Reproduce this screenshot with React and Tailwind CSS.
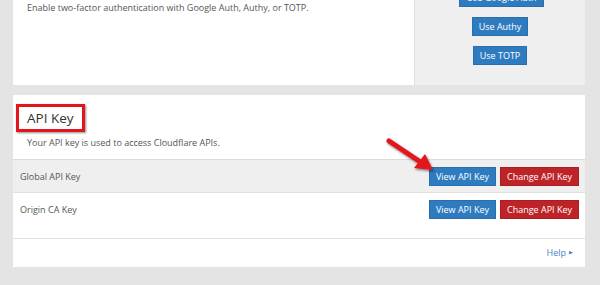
import React from 'react';

const font = { fontFamily: '"Open Sans", "Noto Sans", sans-serif' };

function Btn({ children, color = 'blue', className = '' }) {
  const colors =
    color === 'blue'
      ? 'bg-[#2f7bbf] border-[#2a6eab]'
      : 'bg-[#bd2327] border-[#a81e22]';
  return (
    <button
      className={`h-[19px] px-[6px] text-[9px] leading-none text-white border ${colors} ${className}`}
    >
      {children}
    </button>
  );
}

function KeyRow({ label, shaded }) {
  return (
    <div
      className={`flex items-start justify-between pl-[7px] pr-[6px] pt-[7px] border-b border-[#e2e2e2] ${
        shaded ? 'bg-[#efefef] h-[33px]' : 'bg-white h-[46px]'
      }`}
    >
      <span className="text-[9px] leading-[19px] text-[#555]">{label}</span>
      <div className="flex gap-[4px]">
        <Btn>View API Key</Btn>
        <Btn color="red">Change API Key</Btn>
      </div>
    </div>
  );
}

export default function App() {
  return (
    <div className="relative w-[600px] h-[285px] overflow-hidden bg-[#e4e4e4]" style={font}>
      <div className="pl-[13px] pr-[15px] -mt-[40px]">
        {/* two factor card */}
        <div className="flex h-[125px] bg-white">
          <div className="flex-1 pl-[14px] pt-[41px]">
            <p className="text-[9px] leading-[14px] text-[#555]">
              Enable two-factor authentication with Google Auth, Authy, or TOTP.
            </p>
          </div>
          <div className="w-[171px] bg-[#efefef] border-l border-[#dedede] flex flex-col items-center gap-[10px] pt-[28px]">
            <Btn className="ml-[3px]">Use Google Auth</Btn>
            <Btn>Use Authy</Btn>
            <Btn>Use TOTP</Btn>
          </div>
        </div>

        {/* api key card */}
        <div className="mt-[10px] bg-white">
          <div className="pl-[3px] pt-[9px] pb-[10px] border-b border-[#dcdcdc]">
            <h2 className="inline-block border-[3px] border-[#e3151c] shadow-[1px_1px_2px_rgba(0,0,0,0.45)] px-[8px] text-[13.5px] leading-[22px] text-[#333]">
              API Key
            </h2>
            <p className="pl-[11px] pt-[5px] text-[9px] leading-[12px] text-[#555]">
              Your API key is used to access Cloudflare APIs.
            </p>
          </div>
          <KeyRow label="Global API Key" shaded />
          <KeyRow label="Origin CA Key" />
          <div className="h-[28px] flex items-center justify-end pr-[12px]">
            <a className="text-[9px] text-[#4a86c8] flex items-center gap-[3px]">
              Help
              <span className="text-[5px]">▶</span>
            </a>
          </div>
        </div>
      </div>

      {/* annotation arrow */}
      <svg className="absolute left-0 top-0 pointer-events-none" width="600" height="285">
        <defs>
          <filter id="sh" x="-20%" y="-20%" width="140%" height="140%">
            <feDropShadow dx="1" dy="1.5" stdDeviation="1" floodColor="#000" floodOpacity="0.5" />
          </filter>
        </defs>
        <g filter="url(#sh)">
          <line x1="389" y1="141" x2="422" y2="163" stroke="#e3151c" strokeWidth="5" strokeLinecap="round" />
          <polygon points="433,170 414,168 425,154" fill="#e3151c" />
        </g>
      </svg>
    </div>
  );
}
